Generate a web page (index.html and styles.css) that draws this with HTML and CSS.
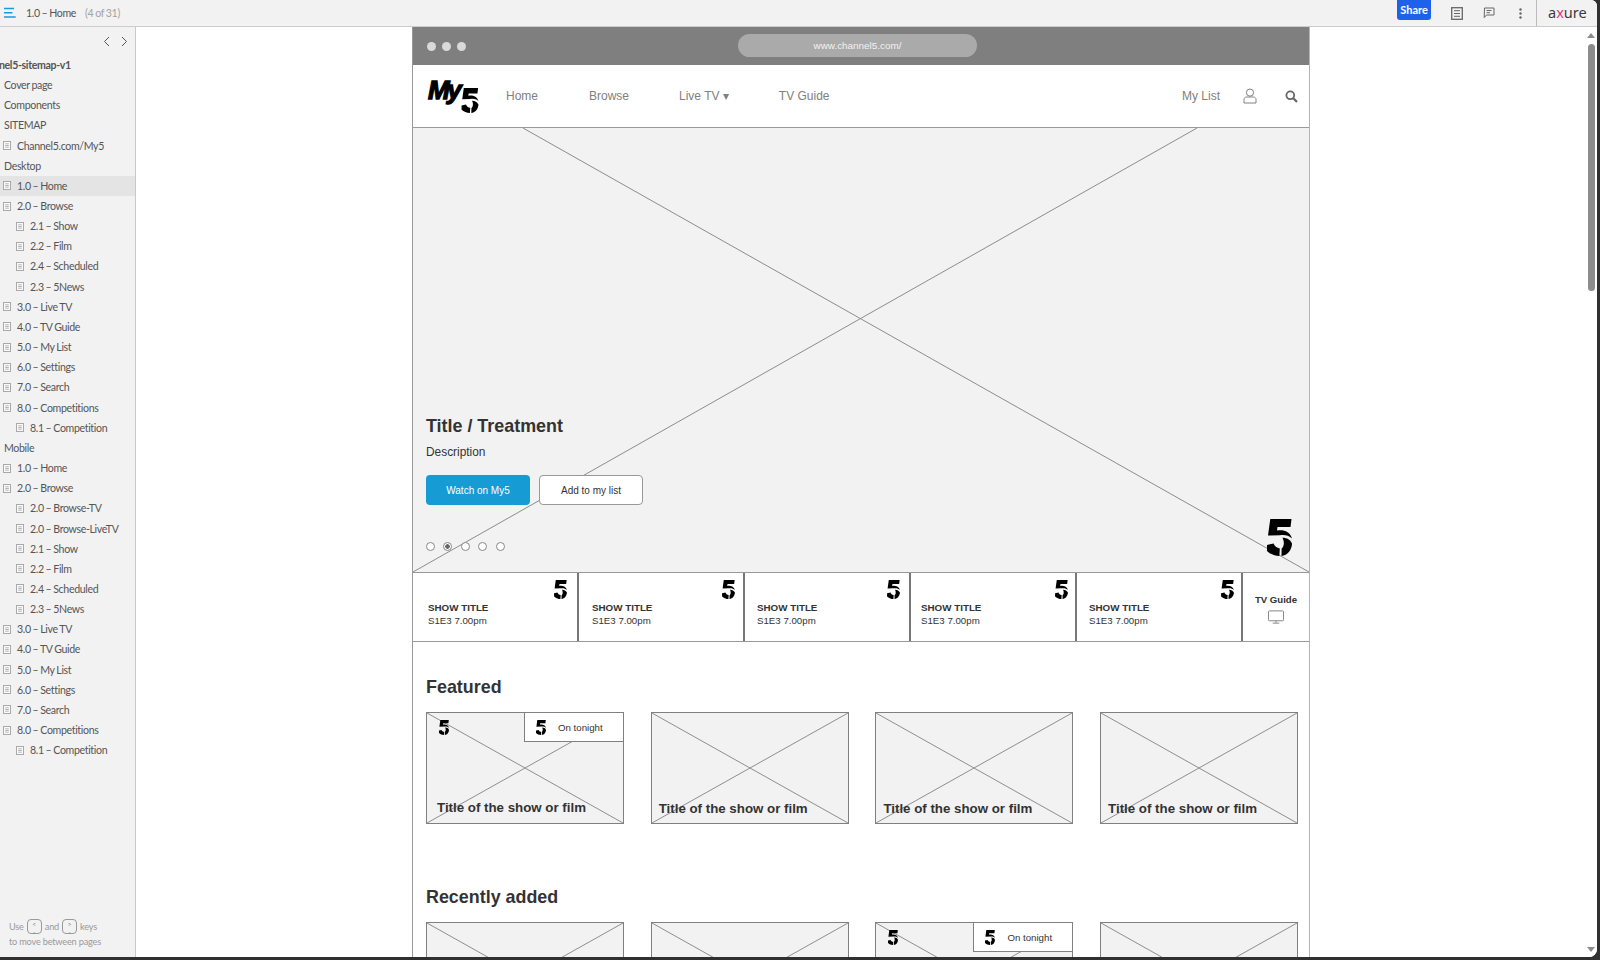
FILE: index.html
```html
<!DOCTYPE html>
<html lang="en">
<head>
<meta charset="utf-8">
<title>1.0 – Home</title>
<link rel="stylesheet" href="styles.css">
</head>
<body>
<svg class="defs" width="0" height="0" aria-hidden="true">
  <symbol id="five" viewBox="0 0 25 37">
    <path d="M3.3 0H24.5L23.5 8H10.5L10 11.5C17 10.5 23 12.5 25 19.5C22 16.5 18 15.6 13 16.2L1 16.5Z"/>
    <path d="M15.4 18.8C19.5 18.6 23.4 20.8 25 24.5C24.8 31 20.5 36.4 14.5 37L14.6 29.5C17.3 27.8 17.6 22.5 15.4 18.8Z"/>
    <path d="M0 26L6.6 24.5C7.4 27 9.8 29 12.8 29.4L12.4 37C7.6 37 3 35 0 32Z"/>
  </symbol>
  <symbol id="page" viewBox="0 0 8 9">
    <rect x="0.5" y="0.5" width="7" height="8" fill="#fafafa" stroke="#a9a9a9"/>
    <path d="M2.2 2.8H5.8M2.2 4.5H5.8M2.2 6.2H5.8" stroke="#b5b5b5" fill="none"/>
  </symbol>
</svg>
<div class="app">
  <header class="topbar">
    <svg class="burger" width="13" height="12" viewBox="0 0 13 12"><path d="M1 1.5H11M1 5.8H9.5M1 10H12.7" stroke="#1a9ad6" stroke-width="1.5" fill="none"/></svg>
    <span class="page-name">1.0 – Home</span>
    <span class="page-count">(4 of 31)</span>
    <div class="top-actions">
      <span class="share">Share</span>
      <svg class="act act-notes" width="12" height="13" viewBox="0 0 12 13"><rect x="0.7" y="0.7" width="10.6" height="11.6" fill="none" stroke="#666" stroke-width="1.3"/><path d="M3 3.7H9M3 6.5H9M3 9.3H9" stroke="#666" fill="none"/></svg>
      <svg class="act act-chat" width="12" height="12" viewBox="0 0 12 12"><path d="M1.5 1H11V8H3.5L1.2 10.6Z" fill="none" stroke="#666"/><path d="M3.5 3.5H8.5M3.5 5.7H7" stroke="#666" fill="none"/></svg>
      <svg class="act act-dots" width="3" height="11" viewBox="0 0 3 11"><circle cx="1.5" cy="1.5" r="1.2" fill="#666"/><circle cx="1.5" cy="5.5" r="1.2" fill="#666"/><circle cx="1.5" cy="9.5" r="1.2" fill="#666"/></svg>
      <div class="brand">a<span class="brand-x">x</span>ure</div>
    </div>
  </header>
  <div class="workspace">
    <aside class="sidebar">
      <div class="side-arrows">
        <svg width="7" height="11" viewBox="0 0 7 11"><path d="M6 1L1.5 5.5L6 10" fill="none" stroke="#555"/></svg>
        <svg width="7" height="11" viewBox="0 0 7 11"><path d="M1 1L5.5 5.5L1 10" fill="none" stroke="#555"/></svg>
      </div>
      <div class="project"><span class="project-name">Channel5-sitemap-v1</span></div>
      <nav class="tree">
        <div class="row head">Cover page</div>
        <div class="row head">Components</div>
        <div class="row head">SITEMAP</div>
        <div class="row l1"><svg class="pg"><use href="#page"/></svg>Channel5.com/My5</div>
        <div class="row head">Desktop</div>
        <div class="row l1 current"><svg class="pg"><use href="#page"/></svg>1.0 – Home</div>
        <div class="row l1"><svg class="pg"><use href="#page"/></svg>2.0 – Browse</div>
        <div class="row l2"><svg class="pg"><use href="#page"/></svg>2.1 – Show</div>
        <div class="row l2"><svg class="pg"><use href="#page"/></svg>2.2 – Film</div>
        <div class="row l2"><svg class="pg"><use href="#page"/></svg>2.4 – Scheduled</div>
        <div class="row l2"><svg class="pg"><use href="#page"/></svg>2.3 – 5News</div>
        <div class="row l1"><svg class="pg"><use href="#page"/></svg>3.0 – Live TV</div>
        <div class="row l1"><svg class="pg"><use href="#page"/></svg>4.0 – TV Guide</div>
        <div class="row l1"><svg class="pg"><use href="#page"/></svg>5.0 – My List</div>
        <div class="row l1"><svg class="pg"><use href="#page"/></svg>6.0 – Settings</div>
        <div class="row l1"><svg class="pg"><use href="#page"/></svg>7.0 – Search</div>
        <div class="row l1"><svg class="pg"><use href="#page"/></svg>8.0 – Competitions</div>
        <div class="row l2"><svg class="pg"><use href="#page"/></svg>8.1 – Competition</div>
        <div class="row head">Mobile</div>
        <div class="row l1"><svg class="pg"><use href="#page"/></svg>1.0 – Home</div>
        <div class="row l1"><svg class="pg"><use href="#page"/></svg>2.0 – Browse</div>
        <div class="row l2"><svg class="pg"><use href="#page"/></svg>2.0 – Browse-TV</div>
        <div class="row l2"><svg class="pg"><use href="#page"/></svg>2.0 – Browse-LiveTV</div>
        <div class="row l2"><svg class="pg"><use href="#page"/></svg>2.1 – Show</div>
        <div class="row l2"><svg class="pg"><use href="#page"/></svg>2.2 – Film</div>
        <div class="row l2"><svg class="pg"><use href="#page"/></svg>2.4 – Scheduled</div>
        <div class="row l2"><svg class="pg"><use href="#page"/></svg>2.3 – 5News</div>
        <div class="row l1"><svg class="pg"><use href="#page"/></svg>3.0 – Live TV</div>
        <div class="row l1"><svg class="pg"><use href="#page"/></svg>4.0 – TV Guide</div>
        <div class="row l1"><svg class="pg"><use href="#page"/></svg>5.0 – My List</div>
        <div class="row l1"><svg class="pg"><use href="#page"/></svg>6.0 – Settings</div>
        <div class="row l1"><svg class="pg"><use href="#page"/></svg>7.0 – Search</div>
        <div class="row l1"><svg class="pg"><use href="#page"/></svg>8.0 – Competitions</div>
        <div class="row l2"><svg class="pg"><use href="#page"/></svg>8.1 – Competition</div>
      </nav>
      <div class="hint">
        <div class="hint-line">Use <span class="key">&lt;<br>,</span> and <span class="key">&gt;<br>.</span> keys</div>
        <div class="hint-line">to move between pages</div>
      </div>
    </aside>
    <main class="canvas">
      <div class="frame">
        <div class="browser-bar">
          <div class="dots"><i></i><i></i><i></i></div>
          <div class="url">www.channel5.com/</div>
        </div>
        <div class="site-nav">
          <svg class="my5" width="54" height="36" viewBox="0 0 54 36"><text class="my5-text" x="1" y="20">My</text><use href="#five" x="33" y="9" width="20" height="25"/></svg>
          <a class="nl nl-home">Home</a>
          <a class="nl nl-browse">Browse</a>
          <a class="nl nl-live">Live TV ▾</a>
          <a class="nl nl-guide">TV Guide</a>
          <a class="nl nl-list">My List</a>
          <svg class="user" width="14" height="16" viewBox="0 0 14 16"><circle cx="7" cy="4.6" r="3.6" fill="none" stroke="#808080"/><path d="M1 15V11.5C1 10 2.2 9 3.6 9H10.4C11.8 9 13 10 13 11.5V15Z" fill="none" stroke="#808080"/></svg>
          <svg class="search" width="13" height="13" viewBox="0 0 13 13"><circle cx="5.3" cy="5.3" r="3.9" fill="none" stroke="#666" stroke-width="1.8"/><path d="M8.3 8.3L12 12" stroke="#666" stroke-width="2.2"/></svg>
        </div>
        <section class="hero">
          <svg class="xlines" viewBox="0 0 896 445" preserveAspectRatio="none"><path d="M110 0L896 445M784 0L0 445" fill="none" stroke="#8c8c8c"/></svg>
          <div class="hero-body">
            <h1 class="hero-title">Title / Treatment</h1>
            <p class="hero-desc">Description</p>
            <div class="hero-btns">
              <span class="btn btn-primary">Watch on My5</span>
              <span class="btn btn-plain">Add to my list</span>
            </div>
            <div class="radios"><i></i><i class="on"></i><i></i><i></i><i></i></div>
          </div>
          <svg class="hero-five"><use href="#five"/></svg>
        </section>
        <section class="shows">
          <div class="show show-1"><svg class="sfive"><use href="#five"/></svg><b>SHOW TITLE</b><span>S1E3 7.00pm</span></div>
          <div class="show show-2"><svg class="sfive"><use href="#five"/></svg><b>SHOW TITLE</b><span>S1E3 7.00pm</span></div>
          <div class="show show-3"><svg class="sfive"><use href="#five"/></svg><b>SHOW TITLE</b><span>S1E3 7.00pm</span></div>
          <div class="show show-4"><svg class="sfive"><use href="#five"/></svg><b>SHOW TITLE</b><span>S1E3 7.00pm</span></div>
          <div class="show show-5"><svg class="sfive"><use href="#five"/></svg><b>SHOW TITLE</b><span>S1E3 7.00pm</span></div>
          <div class="guide">
            <b>TV Guide</b>
            <svg width="16" height="14" viewBox="0 0 17 14"><rect x="0.5" y="0.5" width="16" height="10.5" rx="1" fill="none" stroke="#808080"/><path d="M8.5 11V13M5 13.5H12" stroke="#808080" fill="none"/></svg>
          </div>
        </section>
        <section class="rail rail-featured">
          <h2>Featured</h2>
          <div class="cards">
            <div class="card card-a">
              <svg class="xlines" viewBox="0 0 198 112" preserveAspectRatio="none"><path d="M0 0L198 112M198 0L0 112" fill="none" stroke="#8c8c8c"/></svg>
              <svg class="cfive"><use href="#five"/></svg>
              <div class="tonight"><svg class="tfive"><use href="#five"/></svg><span>On tonight</span></div>
              <span class="card-title">Title of the show or film</span>
            </div>
            <div class="card">
              <svg class="xlines" viewBox="0 0 198 112" preserveAspectRatio="none"><path d="M0 0L198 112M198 0L0 112" fill="none" stroke="#8c8c8c"/></svg>
              <span class="card-title">Title of the show or film</span>
            </div>
            <div class="card">
              <svg class="xlines" viewBox="0 0 198 112" preserveAspectRatio="none"><path d="M0 0L198 112M198 0L0 112" fill="none" stroke="#8c8c8c"/></svg>
              <span class="card-title">Title of the show or film</span>
            </div>
            <div class="card">
              <svg class="xlines" viewBox="0 0 198 112" preserveAspectRatio="none"><path d="M0 0L198 112M198 0L0 112" fill="none" stroke="#8c8c8c"/></svg>
              <span class="card-title">Title of the show or film</span>
            </div>
          </div>
        </section>
        <section class="rail rail-recent">
          <h2>Recently added</h2>
          <div class="cards">
            <div class="card"><svg class="xlines" viewBox="0 0 198 112" preserveAspectRatio="none"><path d="M0 0L198 112M198 0L0 112" fill="none" stroke="#8c8c8c"/></svg></div>
            <div class="card"><svg class="xlines" viewBox="0 0 198 112" preserveAspectRatio="none"><path d="M0 0L198 112M198 0L0 112" fill="none" stroke="#8c8c8c"/></svg></div>
            <div class="card">
              <svg class="xlines" viewBox="0 0 198 112" preserveAspectRatio="none"><path d="M0 0L198 112M198 0L0 112" fill="none" stroke="#8c8c8c"/></svg>
              <svg class="cfive"><use href="#five"/></svg>
              <div class="tonight"><svg class="tfive"><use href="#five"/></svg><span>On tonight</span></div>
            </div>
            <div class="card"><svg class="xlines" viewBox="0 0 198 112" preserveAspectRatio="none"><path d="M0 0L198 112M198 0L0 112" fill="none" stroke="#8c8c8c"/></svg></div>
          </div>
        </section>
      </div>
    </main>
    <div class="scrollbar">
      <i class="arrow-up"></i>
      <i class="thumb"></i>
      <i class="arrow-down"></i>
    </div>
  </div>
</div>
</body>
</html>
```
FILE: styles.css
```css
* { box-sizing: border-box; }
html, body { margin: 0; padding: 0; height: 100%; overflow: hidden; }
body { background: #303030; font-family: "Liberation Sans", Arial, sans-serif; color: #333; }
.defs { position: absolute; }
.app { width: 1597px; height: 957px; background: #fff; border-radius: 0 6px 8px 0; overflow: hidden; display: flex; flex-direction: column; }

.topbar { height: 27px; flex: none; background: #f2f2f2; border-bottom: 1px solid #ccc; display: flex; align-items: center; font-family: Lato, "Noto Sans", sans-serif; font-size: 10.6px; letter-spacing: -0.35px; word-spacing: -0.5px; color: #555; }
.burger { margin-left: 3px; margin-right: 10px; }
.page-count { margin-left: 9px; color: #a3a3a3; }
.top-actions { margin-left: auto; display: flex; align-items: center; height: 100%; letter-spacing: 0; word-spacing: 0; }
.share { width: 34px; height: 20px; margin-top: -6px; background: #1e62ec; color: #fff; border-radius: 0 0 3px 3px; font-size: 11px; line-height: 20px; text-align: center; font-weight: 700; }
.act { flex: none; }
.act-notes { margin-left: 20px; }
.act-chat { margin-left: 20px; }
.act-dots { margin-left: 24px; }
.brand { margin-left: 14px; width: 61px; height: 100%; border-left: 1px solid #bbb; padding-left: 11px; font-size: 14.5px; line-height: 25px; color: #3a3a3a; font-family: "Noto Sans", sans-serif; }
.brand-x { color: #e0357c; }

.workspace { flex: 1; min-height: 0; display: flex; }
.sidebar { width: 136px; flex: none; background: #f2f2f2; border-right: 1px solid #c8c8c8; display: flex; flex-direction: column; font-family: Lato, "Noto Sans", sans-serif; font-size: 10.6px; letter-spacing: -0.35px; word-spacing: -0.5px; color: #555; overflow: hidden; }
.side-arrows { display: flex; justify-content: flex-end; gap: 11px; padding: 9px 7px 0 0; height: 28px; align-items: flex-start; }
.project { height: 20px; line-height: 20px; white-space: nowrap; font-weight: 700; }
.project-name { margin-left: -24px; }
.row { height: 20.16px; display: flex; align-items: center; white-space: pre; }
.head { padding-left: 4px; }
.pg { width: 8px; height: 9px; flex: none; margin-right: 6px; }
.l1 { padding-left: 3px; }
.l2 { padding-left: 16px; }
.current { background: #e4e4e4; }
.hint { margin-top: auto; padding: 0 0 8px 9px; font-size: 9.2px; letter-spacing: -0.2px; word-spacing: 0; color: #9a9a9a; }
.hint-line { display: flex; align-items: center; height: 15px; gap: 3px; }
.key { display: inline-block; width: 15px; height: 15px; border: 1px solid #999; border-radius: 4px; font-size: 7px; line-height: 6px; text-align: center; color: #888; padding-top: 1px; }

.canvas { flex: 1; min-width: 0; overflow: hidden; padding-left: 276px; background: #fff; }
.frame { width: 898px; height: 930px; border-left: 1px solid #999; border-right: 1px solid #b5b5b5; overflow: hidden; }
.browser-bar { height: 38px; background: #7f7f7f; display: flex; align-items: center; }
.dots { display: flex; gap: 6px; margin-left: 14px; }
.dots i { width: 9px; height: 9px; border-radius: 50%; background: #d9d9d9; }
.url { width: 239px; height: 23px; margin-left: 272px; margin-top: -1px; border-radius: 12px; background: #aaa; color: #f2f2f2; font-size: 9.9px; line-height: 23px; text-align: center; }

.site-nav { height: 63px; display: flex; align-items: center; border-bottom: 1px solid #999; font-size: 12px; color: #808080; }
.my5 { margin-left: 14px; margin-top: 2px; flex: none; overflow: visible; }
.my5-text { font-family: "Liberation Sans", sans-serif; font-weight: 700; font-style: italic; font-size: 26px; letter-spacing: -2.4px; stroke: #000; stroke-width: 1.3px; fill: #000; }
.nl-home { margin-left: 25px; }
.nl-browse { margin-left: 51px; }
.nl-live { margin-left: 50px; }
.nl-guide { margin-left: 50px; }
.nl-list { margin-left: auto; }
.user { margin-left: 23px; }
.search { margin-left: 28px; margin-right: 11px; }

.hero { height: 445px; position: relative; background: #f2f2f2; border-bottom: 1px solid #999; }
.xlines { position: absolute; inset: 0; width: 100%; height: 100%; }
.hero-body { position: relative; padding: 287px 0 0 13px; }
.hero-title { margin: 0; font-size: 17.9px; line-height: 22px; font-weight: 700; color: #333; }
.hero-desc { margin: 7px 0 0; font-size: 11.9px; line-height: 16px; color: #333; }
.hero-btns { display: flex; gap: 9px; margin-top: 15px; }
.btn { width: 104px; height: 30px; border-radius: 4px; font-size: 10px; line-height: 31px; text-align: center; }
.btn-primary { background: #169bd5; color: #fff; }
.btn-plain { background: #fff; border: 1px solid #999; line-height: 29px; color: #333; }
.radios { display: flex; gap: 8.4px; margin-top: 37px; }
.radios i { width: 9px; height: 9px; border-radius: 50%; background: #fff; border: 1px solid #888; }
.radios .on { background: radial-gradient(circle, #666 0 2px, #fff 2.5px); }
.hero-five { position: absolute; right: 17px; bottom: 16px; width: 25px; height: 37px; }

.shows { height: 69px; display: grid; grid-template-columns: 166px 166px 166px 166px 166px 1fr; border-bottom: 1px solid #999; }
.show { position: relative; border-right: 2px solid #777; display: flex; flex-direction: column; padding: 28px 0 0 15px; font-size: 9.7px; color: #333; line-height: 13px; }
.show b { font-size: 9.8px; color: #333; }
.show-2 { padding-left: 13px; }
.show-3 { padding-left: 12px; }
.show-4 { padding-left: 10px; }
.show-5 { padding-left: 12px; }
.sfive { position: absolute; top: 7px; right: 7px; width: 13px; height: 19px; }
.show-1 .sfive { right: 10px; }
.show-2 .sfive { right: 8px; }
.show-3 .sfive { right: 9px; }
.guide { display: flex; flex-direction: column; align-items: center; padding-top: 21px; gap: 4px; font-size: 9.6px; color: #333; line-height: 12px; }

.rail { padding-left: 13px; }
.rail h2 { margin: 0 0 15px; font-size: 17.9px; line-height: 20px; font-weight: 700; color: #333; }
.rail-featured { padding-top: 35px; }
.rail-recent { padding-top: 63px; }
.cards { display: grid; grid-template-columns: repeat(4, 198px); column-gap: 26.7px; }
.card { height: 112px; position: relative; background: #f2f2f2; border: 1px solid #808080; display: flex; align-items: flex-end; padding: 0 0 6px 7px; }
.card-a { padding: 0 0 7px 10px; }
.card-title { position: relative; font-size: 13.3px; line-height: 16px; font-weight: 700; color: #333; white-space: nowrap; }
.cfive { position: absolute; left: 12px; top: 7px; width: 10px; height: 15px; }
.tonight { position: absolute; top: -1px; right: -1px; width: 100px; height: 30px; background: #fff; border: 1px solid #808080; display: flex; align-items: center; font-size: 9.7px; color: #333; }
.tfive { width: 10px; height: 15px; margin-left: 11px; margin-right: 12px; flex: none; }

.scrollbar { width: 12px; flex: none; display: flex; flex-direction: column; align-items: center; background: #fff; }
.arrow-up { width: 0; height: 0; margin-top: 6px; border: 4px solid transparent; border-top: 0; border-bottom: 5px solid #8c8c8c; }
.thumb { width: 7px; height: 247px; margin-top: 6px; border-radius: 4px; background: #8c8c8c; }
.arrow-down { width: 0; height: 0; margin-top: auto; margin-bottom: 5px; border: 4px solid transparent; border-bottom: 0; border-top: 5px solid #8c8c8c; }
```
